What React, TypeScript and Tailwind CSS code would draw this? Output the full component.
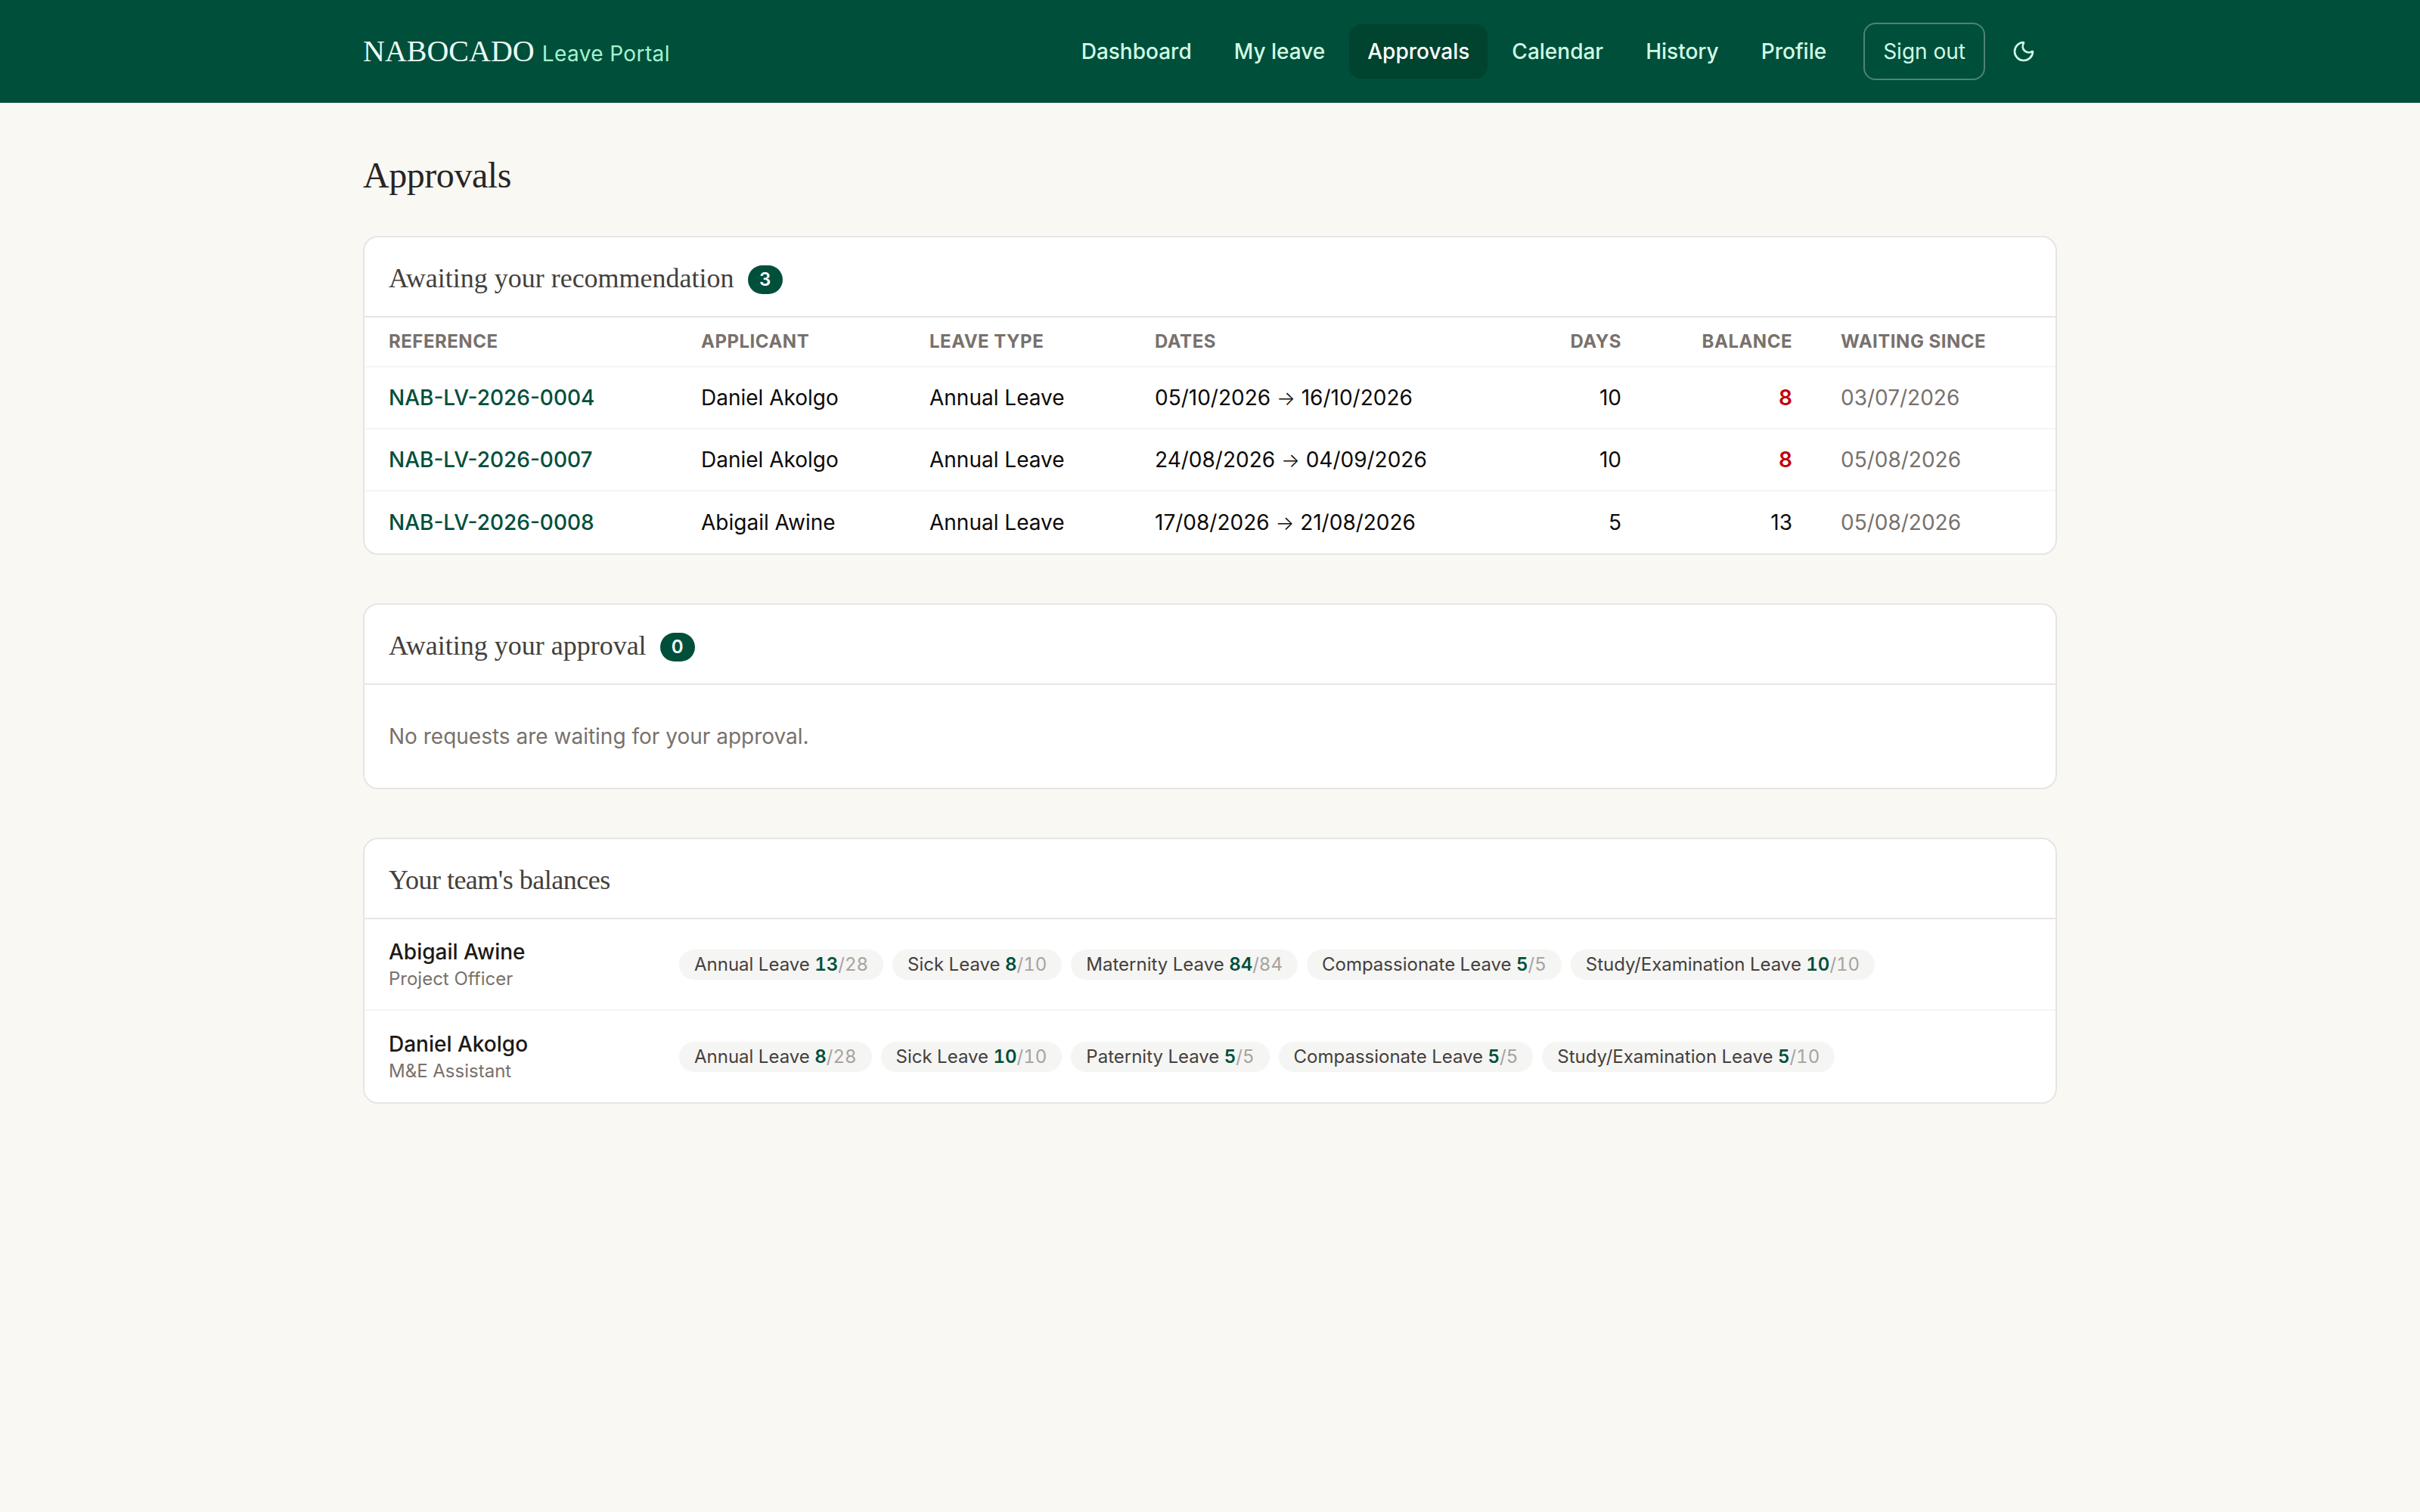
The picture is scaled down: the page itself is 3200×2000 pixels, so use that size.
import { Moon } from "lucide-react"

const serif = "font-['Liberation_Serif',serif]"

/* ─── Data ─── */

const navItems = ["Dashboard", "My leave", "Approvals", "Calendar", "History", "Profile"]

const requests = [
  { ref: "NAB-LV-2026-0004", name: "Daniel Akolgo", type: "Annual Leave", from: "05/10/2026", to: "16/10/2026", days: 10, balance: 8, low: true, since: "03/07/2026" },
  { ref: "NAB-LV-2026-0007", name: "Daniel Akolgo", type: "Annual Leave", from: "24/08/2026", to: "04/09/2026", days: 10, balance: 8, low: true, since: "05/08/2026" },
  { ref: "NAB-LV-2026-0008", name: "Abigail Awine", type: "Annual Leave", from: "17/08/2026", to: "21/08/2026", days: 5, balance: 13, low: false, since: "05/08/2026" },
]

const team = [
  {
    name: "Abigail Awine",
    role: "Project Officer",
    balances: [
      ["Annual Leave", 13, 28],
      ["Sick Leave", 8, 10],
      ["Maternity Leave", 84, 84],
      ["Compassionate Leave", 5, 5],
      ["Study/Examination Leave", 10, 10],
    ],
  },
  {
    name: "Daniel Akolgo",
    role: "M&E Assistant",
    balances: [
      ["Annual Leave", 8, 28],
      ["Sick Leave", 10, 10],
      ["Paternity Leave", 5, 5],
      ["Compassionate Leave", 5, 5],
      ["Study/Examination Leave", 5, 10],
    ],
  },
]

/* ─── Pieces ─── */

function CardHeader({ title, count, tight }: { title: string; count?: number; tight?: boolean }) {
  return (
    <div className="flex h-[106px] items-center gap-[18px] border-b-2 border-[#e7e5e4] px-8">
      <h2 className={`${serif} mt-[3px] text-[36px] text-[#44403c] ${tight ? "tracking-[-0.5px]" : ""}`}>{title}</h2>
      {count !== undefined && (
        <span className="mt-2 flex h-[38px] w-[46px] items-center justify-center rounded-full bg-[#004f3b] text-[24px] font-semibold text-white">
          {count}
        </span>
      )}
    </div>
  )
}

const th = "px-8 text-[24px] font-bold uppercase tracking-[0.5px] text-[#78716c]"
const td = "px-8"

export default function App() {
  return (
    <div className="min-h-[2000px] bg-[#faf8f3] font-['Inter',sans-serif] text-[28px] text-[#1c1917]">
      <header className="h-[136px] bg-[#004f3b]">
        <div className="mx-auto flex h-full w-[2240px] items-center justify-between">
          <div className="flex items-baseline gap-[10px]">
            <span className={`${serif} text-[40px] text-[#ecfdf5]`}>NABOCADO</span>
            <span className="text-[28px] tracking-[0.4px] text-[#a4f4cf]">Leave Portal</span>
          </div>
          <nav className="flex items-center gap-2 font-medium text-[#d0fae5]">
            {navItems.map((item) => (
              <a
                key={item}
                className={item === "Approvals" ? "rounded-2xl bg-[#00432f] px-6 py-[15px] text-white" : "rounded-2xl px-6 py-[15px]"}
              >
                {item}
              </a>
            ))}
            <button className="ml-[17px] rounded-2xl border-2 border-white/30 px-6 py-[15px] font-normal">Sign out</button>
            <button className="ml-[3px] mr-[4px] p-6">
              <Moon className="h-8 w-8" />
            </button>
          </nav>
        </div>
      </header>

      <main className="mx-auto w-[2240px] pt-[64px]">
        <h1 className={`${serif} mb-[48px] text-[48px] leading-[64px] tracking-[-0.45px] text-[#292524]`}>Approvals</h1>

        <section className="mb-16 overflow-hidden rounded-[20px] border-2 border-[#e7e5e4] bg-white">
          <CardHeader title="Awaiting your recommendation" count={3} />
          <table className="w-full table-fixed text-left text-[#0c0a09]">
            <thead>
              <tr className="h-[65px] border-b-2 border-[#f5f5f4]">
                <th className={`${th} w-[413px]`}>Reference</th>
                <th className={`${th} w-[302px]`}>Applicant</th>
                <th className={`${th} w-[298px]`}>Leave type</th>
                <th className={`${th} w-[549px]`}>Dates</th>
                <th className={`${th} w-[132px] text-right`}>Days</th>
                <th className={`${th} w-[226px] text-right`}>Balance</th>
                <th className={th}>Waiting since</th>
              </tr>
            </thead>
            <tbody>
              {requests.map((r) => (
                <tr key={r.ref} className="h-[82px] border-b-2 border-[#f5f5f4] last:h-[83px] last:border-b-0">
                  <td className={`${td} font-medium text-[#004f3b]`}>{r.ref}</td>
                  <td className={td}>{r.name}</td>
                  <td className={td}>{r.type}</td>
                  <td className={td}>
                    {r.from} <span className="text-[26px] font-light">→</span> {r.to}
                  </td>
                  <td className={`${td} text-right`}>{r.days}</td>
                  <td className={`${td} text-right ${r.low ? "font-semibold text-[#c10007]" : ""}`}>{r.balance}</td>
                  <td className={`${td} text-[#78716c]`}>{r.since}</td>
                </tr>
              ))}
            </tbody>
          </table>
        </section>

        <section className="mb-16 overflow-hidden rounded-[20px] border-2 border-[#e7e5e4] bg-white">
          <CardHeader title="Awaiting your approval" count={0} />
          <p className="px-8 py-[32px] leading-[72px] text-[#78716c]">No requests are waiting for your approval.</p>
        </section>

        <section className="overflow-hidden rounded-[20px] border-2 border-[#e7e5e4] bg-white">
          <CardHeader title="Your team's balances" tight />
          {team.map((m) => (
            <div key={m.name} className="flex h-[121px] items-center border-b-2 border-[#f5f5f4] px-8 last:border-b-0">
              <div className="w-[384px] shrink-0">
                <div className="text-[28px] leading-[36px] font-medium">{m.name}</div>
                <div className="mt-[2px] text-[24px] leading-[32px] text-[#78716c]">{m.role}</div>
              </div>
              <div className="flex gap-3">
                {m.balances.map(([label, left, total]) => (
                  <span key={label as string} className="rounded-full bg-[#f5f5f4] px-5 py-[2px] text-[24px] text-[#44403c] tabular-nums">
                    {label} <b className="font-semibold text-[#004f3b]">{left}</b>
                    <span className="text-[#a8a29e]">/{total}</span>
                  </span>
                ))}
              </div>
            </div>
          ))}
        </section>
      </main>
    </div>
  )
}
